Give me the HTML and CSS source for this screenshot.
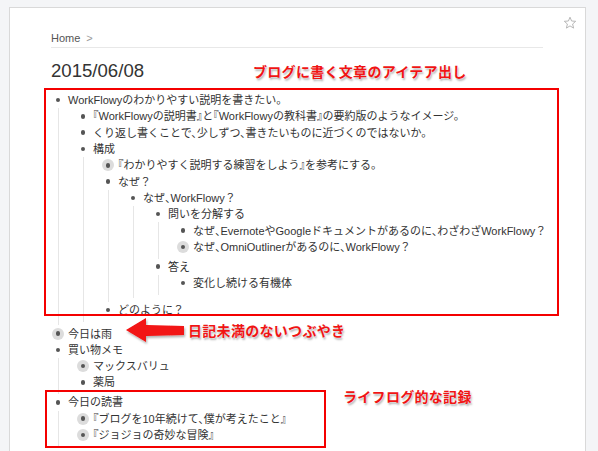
FILE: index.html
```html
<!DOCTYPE html>
<html lang="ja">
<head>
<meta charset="utf-8">
<title>WorkFlowy</title>
<link rel="stylesheet" href="styles.css">
</head>
<body>
<div class="panel">
  <svg class="star" width="14" height="14" viewBox="0 0 14 14"><path d="M7 1.2 L8.6 5 L12.7 5.3 L9.6 8 L10.6 12.1 L7 9.9 L3.4 12.1 L4.4 8 L1.3 5.3 L5.4 5 Z" fill="none" stroke="#b8b8b8" stroke-width="1" stroke-linejoin="round"/></svg>
  <div class="crumbs"><span class="home">Home</span><span class="sep">&gt;</span></div>
  <h1 class="title">2015/06/08</h1>
  <div class="outline">
    <div class="item">
      <div class="row"><span class="b"></span><span class="t">WorkFlowyのわかりやすい説明を書きたい。</span></div>
      <div class="kids">
        <div class="item"><div class="row"><span class="b"></span><span class="t">『WorkFlowyの説明書』と『WorkFlowyの教科書』の要約版のようなイメージ。</span></div></div>
        <div class="item"><div class="row"><span class="b"></span><span class="t">くり返し書くことで、少しずつ、書きたいものに近づくのではないか。</span></div></div>
        <div class="item">
          <div class="row"><span class="b"></span><span class="t">構成</span></div>
          <div class="kids">
            <div class="item"><div class="row"><span class="b c"></span><span class="t">『わかりやすく説明する練習をしよう』を参考にする。</span></div></div>
            <div class="item">
              <div class="row"><span class="b"></span><span class="t">なぜ？</span></div>
              <div class="kids">
                <div class="item">
                  <div class="row"><span class="b"></span><span class="t">なぜ、WorkFlowy？</span></div>
                  <div class="kids">
                    <div class="item">
                      <div class="row"><span class="b"></span><span class="t">問いを分解する</span></div>
                      <div class="kids">
                        <div class="item"><div class="row"><span class="b"></span><span class="t">なぜ、EvernoteやGoogleドキュメントがあるのに、わざわざWorkFlowy？</span></div></div>
                        <div class="item"><div class="row"><span class="b c"></span><span class="t">なぜ、OmniOutlinerがあるのに、WorkFlowy？</span></div></div>
                      </div>
                    </div>
                    <div class="item">
                      <div class="row"><span class="b"></span><span class="t">答え</span></div>
                      <div class="kids">
                        <div class="item"><div class="row"><span class="b"></span><span class="t">変化し続ける有機体</span></div></div>
                      </div>
                    </div>
                  </div>
                </div>
              </div>
            </div>
            <div class="item"><div class="row"><span class="b"></span><span class="t">どのように？</span></div></div>
          </div>
        </div>
      </div>
    </div>
    <div class="item"><div class="row"><span class="b c"></span><span class="t">今日は雨</span></div></div>
    <div class="item">
      <div class="row"><span class="b"></span><span class="t">買い物メモ</span></div>
      <div class="kids">
        <div class="item"><div class="row"><span class="b c"></span><span class="t">マックスバリュ</span></div></div>
        <div class="item"><div class="row"><span class="b"></span><span class="t">薬局</span></div></div>
      </div>
    </div>
    <div class="item">
      <div class="row"><span class="b"></span><span class="t">今日の読書</span></div>
      <div class="kids">
        <div class="item"><div class="row"><span class="b c"></span><span class="t">『ブログを10年続けて、僕が考えたこと』</span></div></div>
        <div class="item"><div class="row"><span class="b c"></span><span class="t">『ジョジョの奇妙な冒険』</span></div></div>
      </div>
    </div>
  </div>
</div>

<div class="box box1"></div>
<div class="box box2"></div>
<div class="note note1">ブログに書く文章のアイテア出し</div>
<div class="note note2">日記未満のないつぶやき</div>
<div class="note note3">ライフログ的な記録</div>
<svg class="arrow" width="70" height="34" viewBox="0 0 70 34">
  <defs>
    <filter id="sh" x="-20%" y="-30%" width="140%" height="170%">
      <feDropShadow dx="1" dy="2" stdDeviation="1.2" flood-color="#000" flood-opacity="0.3"/>
    </filter>
  </defs>
  <polygon points="3,14 23,2 23,9 61,10 61,19 23,20 23,26" fill="#f21212" filter="url(#sh)"/>
</svg>
</body>
</html>
```

FILE: styles.css
```css
html, body {
  margin: 0;
  padding: 0;
}
body {
  position: relative;
  background: #f4f5f7;
  font-family: "Liberation Sans", "Noto Sans CJK JP", sans-serif;
  color: #333;
  height: 451px;
  overflow: hidden;
}
.panel {
  position: relative;
  margin: 7px 0 0 9px;
  width: 492px;
  height: 420px;
  padding: 23px 42px 0 41px;
  background: #fff;
  border: 1px solid #d9d9d9;
  border-bottom: none;
}
.star {
  position: absolute;
  right: 8px;
  top: 8px;
}
.crumbs {
  font-size: 11px;
  line-height: 14px;
  padding-bottom: 2px;
  border-bottom: 1px solid #e8e8e8;
  display: flex;
  gap: 6px;
}
.home { color: #555; }
.sep { color: #999; }
.title {
  margin: 11px 0 0 0;
  font-size: 18.6px;
  line-height: 24px;
  font-weight: normal;
  color: #333;
}
.outline {
  margin-top: 9px;
  font-size: 11px;
}
.row {
  display: flex;
  align-items: center;
  height: 16.3px;
}
.b {
  position: relative;
  flex: none;
  width: 14px;
  height: 14px;
  display: flex;
  align-items: center;
  justify-content: center;
}
.b::after {
  content: "";
  width: 4.5px;
  height: 4.5px;
  border-radius: 50%;
  background: #555;
}
.b.c::before {
  content: "";
  position: absolute;
  left: 1px;
  top: 1px;
  width: 12px;
  height: 12px;
  border-radius: 50%;
  background: #dcdcdc;
}
.b.c::after {
  position: relative;
}
.t {
  margin-left: 3px;
  white-space: nowrap;
  color: #333;
  line-height: 16px;
  font-feature-settings: "halt";
}
.kids {
  margin-left: 7px;
  border-left: 1px solid #e6e6e6;
  padding-left: 17px;
  padding-bottom: 3.6px;
}
.box {
  position: absolute;
  box-sizing: border-box;
  border: 2px solid #f40000;
}
.box1 {
  left: 44px;
  top: 88px;
  width: 515px;
  height: 228px;
}
.box2 {
  left: 45px;
  top: 390px;
  width: 281px;
  height: 58px;
}
.note {
  position: absolute;
  font-family: "Noto Sans CJK JP", sans-serif;
  font-weight: bold;
  font-size: 14px;
  letter-spacing: 0.3px;
  line-height: 18px;
  color: #f01414;
  white-space: nowrap;
  text-shadow: 0 0 1px #fff, 1px 2px 2px rgba(0, 0, 0, 0.3);
}
.note1 { left: 253px; top: 62px; }
.note2 { left: 188px; top: 321px; }
.note3 { left: 343px; top: 387px; }
.arrow {
  position: absolute;
  left: 123px;
  top: 316px;
}
```
